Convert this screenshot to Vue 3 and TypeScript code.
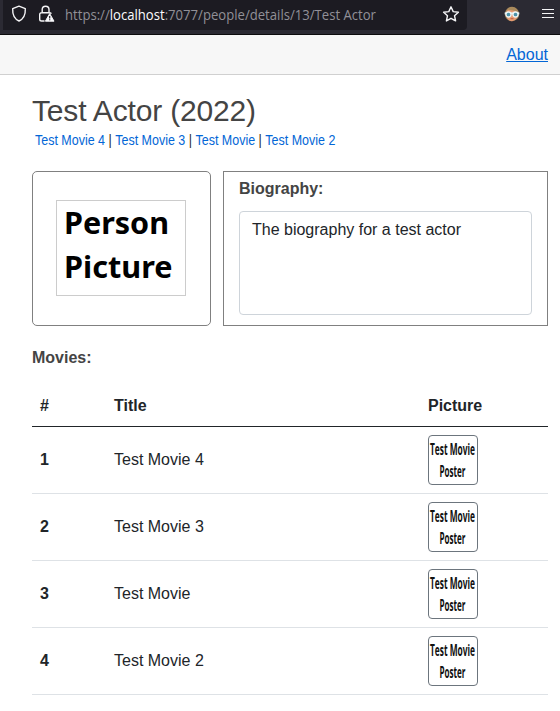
<script setup lang="ts">
const movies: string[] = ['Test Movie 4', 'Test Movie 3', 'Test Movie', 'Test Movie 2']
</script>

<template>
  <div class="page">
    <header class="browser">
      <div class="address">
        <svg class="shield" width="16" height="18" viewBox="0 0 16 18">
          <path d="M8 1.2 14.3 3.6C14.6 9.5 12.4 14 8 16 3.6 14 1.4 9.5 1.7 3.6Z" />
        </svg>
        <svg class="lock" width="17" height="18" viewBox="0 0 17 18">
          <path d="M4.2 7.7V4.6a3.4 3.4 0 0 1 6.8 0V7.7M6.5 16H3.5a1.8 1.8 0 0 1-1.8-1.8V9.5a1.8 1.8 0 0 1 1.8-1.8h8.2a1.8 1.8 0 0 1 1.6 1" />
          <path class="warn" d="M11.7 8.6 16 16.2H7.4Z" />
          <path class="mark" d="M11.7 11v2.5M11.7 14.2v1.1" />
        </svg>
        <svg class="url" width="316" height="24" viewBox="0 0 316 24">
          <text x="0" y="18" textLength="311" lengthAdjust="spacingAndGlyphs">https://<tspan class="host">localhost</tspan>:7077/people/details/13/Test Actor</text>
        </svg>
        <svg class="star" width="18" height="18" viewBox="0 0 18 18">
          <path d="m9 1.8 2.2 4.8 5.2.6-3.9 3.5 1.1 5.2L9 13.3l-4.6 2.6 1.1-5.2-3.9-3.5 5.2-.6Z" />
        </svg>
      </div>
      <svg class="avatar" width="16" height="16" viewBox="0 0 16 16">
        <circle cx="8" cy="8" r="7.2" fill="#a98a5c" />
        <path d="M2 6.6 4 3.8 11.5 5 14 7.4 13 12q-2.2 3.2-5 3.2T3 12Z" fill="#e79a72" />
        <path d="M.7 7.4h14.6" stroke="#e9f3f5" stroke-width="2" />
        <circle cx="4.5" cy="8.5" r="2.5" fill="#4b91a8" stroke="#e9f3f5" stroke-width="1.3" />
        <circle cx="11.5" cy="8.5" r="2.5" fill="#4b91a8" stroke="#e9f3f5" stroke-width="1.3" />
        <path d="M6.5 12.7h3" stroke="#b75d43" />
      </svg>
      <svg class="menu" width="14" height="12" viewBox="0 0 14 12">
        <path d="M1 1.5h12M1 5.5h12M1 9.5h12" />
      </svg>
    </header>

    <nav class="nav"><a>About</a></nav>

    <main>
      <h1>Test Actor (2022)</h1>
      <div class="credits">
        <template v-for="(movie, index) in movies" :key="movie"><span v-if="index > 0">&nbsp;|&nbsp;</span><a>{{ movie }}</a></template>
      </div>

      <section class="profile">
        <div class="portrait">
          <svg width="130" height="96" viewBox="0 0 130 96">
            <rect x=".5" y=".5" width="129" height="95" />
            <text x="8" y="34" textLength="105" lengthAdjust="spacingAndGlyphs">Person</text>
            <text x="8" y="78" textLength="108.5" lengthAdjust="spacingAndGlyphs">Picture</text>
          </svg>
        </div>
        <div class="biography">
          <strong class="label">Biography:</strong>
          <div class="bio-text">The biography for a test actor</div>
        </div>
      </section>

      <strong class="label movies-label">Movies:</strong>
      <table>
        <thead>
          <tr><th class="number">#</th><th class="title">Title</th><th>Picture</th></tr>
        </thead>
        <tbody>
          <tr v-for="(movie, index) in movies" :key="movie">
            <th>{{ index + 1 }}</th>
            <td>{{ movie }}</td>
            <td>
              <svg class="poster" width="50" height="50" viewBox="0 0 50 50">
                <rect x=".5" y=".5" width="49" height="49" rx="3.5" />
                <text x="2" y="19.5" textLength="45" lengthAdjust="spacingAndGlyphs">Test Movie</text>
                <text x="11.5" y="42.4" textLength="26" lengthAdjust="spacingAndGlyphs">Poster</text>
              </svg>
            </td>
          </tr>
        </tbody>
      </table>
    </main>
  </div>
</template>

<style>
body {
  margin: 0;
  background: #fff;
}
</style>

<style scoped>
* {
  box-sizing: border-box;
}
.page {
  width: 560px;
  height: 711px;
  overflow: hidden;
  background: #fff;
  color: #212529;
  font: 16px/24px "Liberation Sans", Arial, sans-serif;
}
svg {
  display: block;
  flex: none;
  overflow: visible;
}
.browser {
  display: flex;
  height: 35px;
  padding-left: 3px;
  background: #2b2a33;
  border-bottom: 1px solid #0c0c0d;
}
.address {
  display: flex;
  align-items: flex-start;
  width: 464px;
  height: 30px;
  padding: 5px 7px 0 8px;
  background: #1c1b22;
  border-radius: 0 0 4px 0;
}
.shield,
.lock,
.star {
  fill: none;
  stroke: #f4f4f6;
  stroke-width: 1.4;
  stroke-linejoin: round;
}
.lock {
  margin-left: 11px;
}
.lock .warn {
  fill: #fbfbfe;
  stroke-width: 1;
}
.lock .mark {
  stroke: #1c1b22;
  stroke-width: 1.2;
}
.url {
  margin: -3px 0 0 10px;
  font: 14px "Open Sans", "Noto Sans", sans-serif;
  fill: #919097;
}
.url .host {
  fill: #fbfbfe;
}
.star {
  margin-left: auto;
}
.avatar {
  margin: 6px 0 0 37px;
}
.menu {
  margin: 8px 0 0 21px;
  stroke: #f4f4f6;
  stroke-width: 1.2;
}
.nav {
  display: flex;
  justify-content: flex-end;
  height: 40px;
  padding: 8px 12px 0 0;
  background: #f7f7f7;
  border-bottom: 1px solid #d0d0d0;
}
.nav a {
  color: #0366d6;
  text-decoration: underline;
}
main {
  padding: 18px 12px 0 32px;
}
h1 {
  margin: 0;
  color: #444;
  font-size: 30px;
  font-weight: 400;
  line-height: 36px;
  letter-spacing: -0.17px;
}
.credits {
  width: max-content;
  height: 20px;
  margin: 2px 0 0 3px;
  font-size: 15px;
  line-height: 18px;
  white-space: nowrap;
  transform: scaleX(0.832);
  transform-origin: left;
}
.credits a {
  color: #0366d6;
}
.profile {
  display: grid;
  grid-template-columns: 179px 325px;
  gap: 12px;
  height: 155px;
  margin-top: 20px;
}
.portrait {
  padding: 28px 0 0 23px;
  border: 1px solid #808080;
  border-radius: 5px;
}
.portrait rect {
  fill: #fff;
  stroke: #ccc;
}
.portrait text {
  font: 700 31px "Noto Sans", "Open Sans", sans-serif;
  fill: #000;
}
.biography {
  padding: 5px 15px 10px;
  border: 1px solid #808080;
}
.label {
  display: block;
  color: #444;
}
.bio-text {
  height: 104px;
  margin-top: 10px;
  padding: 6px 12px;
  border: 1px solid #ced4da;
  border-radius: 4px;
}
.movies-label {
  margin-top: 20px;
}
table {
  width: 516px;
  margin-top: 16px;
  border-collapse: separate;
  border-spacing: 0;
  table-layout: fixed;
}
th,
td {
  padding: 8px;
  border-bottom: 1px solid #dee2e6;
  text-align: left;
  vertical-align: middle;
}
thead th {
  height: 41px;
  border-bottom-color: #212529;
}
.number {
  width: 74px;
}
.title {
  width: 314px;
}
.poster rect {
  fill: #fff;
  stroke: #6c757d;
}
.poster text {
  font: 700 16px "Open Sans", "Noto Sans", sans-serif;
  fill: #111;
}
</style>
